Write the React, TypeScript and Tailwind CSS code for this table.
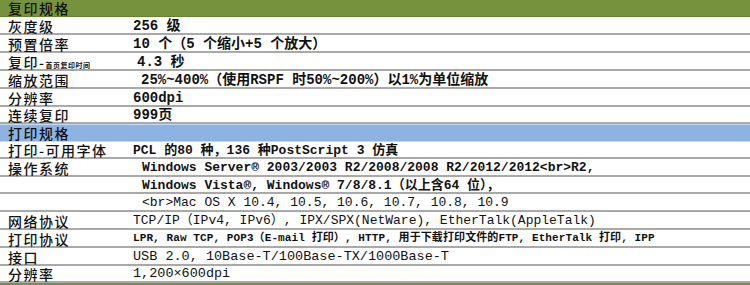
import React from "react";

type Row = {
    label?: React.ReactNode;
    value?: React.ReactNode;
    h: string;
    kind?: "green" | "blue";
    valueClass?: string;
};

const cjk = "font-['Noto_Sans_CJK_SC',sans-serif]";
const mono = "font-['Liberation_Mono','Noto_Sans_CJK_SC',monospace]";

const rows: Row[] = [
    { label: "复印规格", h: "h-[17px]", kind: "green" },
    { label: "灰度级", value: "256 级", h: "h-[18px]", valueClass: "text-[14px] font-bold" },
    { label: "预置倍率", value: "10 个（5 个缩小+5 个放大）", h: "h-[18px]", valueClass: "text-[14px] font-bold" },
    {
        label: (
            <>
                复印-<span className="text-[7px] tracking-[0.5px] font-bold">首页复印时间</span>
            </>
        ),
        value: "4.3 秒",
        h: "h-[18px]",
        valueClass: "pl-[4px] text-[14px] font-bold",
    },
    {
        label: "缩放范围",
        value: "25%~400%（使用RSPF 时50%~200%）以1%为单位缩放",
        h: "h-[18px]",
        valueClass: "pl-[8px] text-[14px] font-bold",
    },
    { label: "分辨率", value: "600dpi", h: "h-[18px]", valueClass: "text-[14px] font-bold" },
    { label: "连续复印", value: "999页", h: "h-[17px]", valueClass: "text-[14px] font-bold" },
    { label: "打印规格", h: "h-[18px]", kind: "blue" },
    {
        label: "打印-可用字体",
        value: "PCL 的80 种，136 种PostScript 3 仿真",
        h: "h-[17px]",
        valueClass: "text-[13px] font-bold",
    },
    {
        label: "操作系统",
        value: "Windows Server® 2003/2003 R2/2008/2008 R2/2012/2012<br>R2,",
        h: "h-[18px]",
        valueClass: "pl-[9px] text-[13px] font-bold",
    },
    {
        value: "Windows Vista®, Windows® 7/8/8.1（以上含64 位），",
        h: "h-[17px]",
        valueClass: "pl-[9px] text-[13px] font-bold",
    },
    {
        value: "<br>Mac OS X 10.4, 10.5, 10.6, 10.7, 10.8, 10.9",
        h: "h-[18px]",
        valueClass: "pl-[9px] text-[13px]",
    },
    {
        label: "网络协议",
        value: "TCP/IP（IPv4, IPv6）, IPX/SPX(NetWare), EtherTalk(AppleTalk)",
        h: "h-[18px]",
        valueClass: "text-[13px]",
    },
    {
        label: "打印协议",
        value: "LPR, Raw TCP, POP3（E-mail 打印）, HTTP, 用于下载打印文件的FTP, EtherTalk 打印, IPP",
        h: "h-[18px]",
        valueClass: "text-[11px] font-bold tracking-[0.1px]",
    },
    {
        label: "接口",
        value: "USB 2.0, 10Base-T/100Base-TX/1000Base-T",
        h: "h-[18px]",
        valueClass: "text-[13.5px]",
    },
    { label: "分辨率", value: "1,200×600dpi", h: "h-[17px]", valueClass: "text-[13.5px]" },
];

export default function App() {
    return (
        <div className="w-[750px] h-[285px] bg-white text-[#111] overflow-hidden">
            {rows.map((row, i) => {
                if (row.kind) {
                    return (
                        <div
                            key={i}
                            className={`${row.h} flex items-center pl-2 text-[14px] font-medium leading-none tracking-[1.5px] ${cjk} ${
                                row.kind === "green"
                                    ? "bg-[#76923c] border-b border-[#66822f]"
                                    : "bg-[#8db3e2] border-t border-[#c6d9f0] border-b border-[#7f9fc8]"
                            }`}
                        >
                            {row.label}
                        </div>
                    );
                }
                return (
                    <div key={i} className={`${row.h} flex items-center border-b-2 border-[#a9a9a9] box-border`}>
                        <div className={`w-[133px] shrink-0 pl-2 pt-[1px] text-[14px] font-medium tracking-[1.5px] leading-none whitespace-nowrap ${cjk}`}>
                            {row.label}
                        </div>
                        <div className={`flex-1 pt-[1px] leading-none whitespace-nowrap ${mono} ${row.valueClass ?? ""}`}>
                            {row.value}
                        </div>
                    </div>
                );
            })}
            <div className="h-[2px] bg-[#76923c]" />
        </div>
    );
}
